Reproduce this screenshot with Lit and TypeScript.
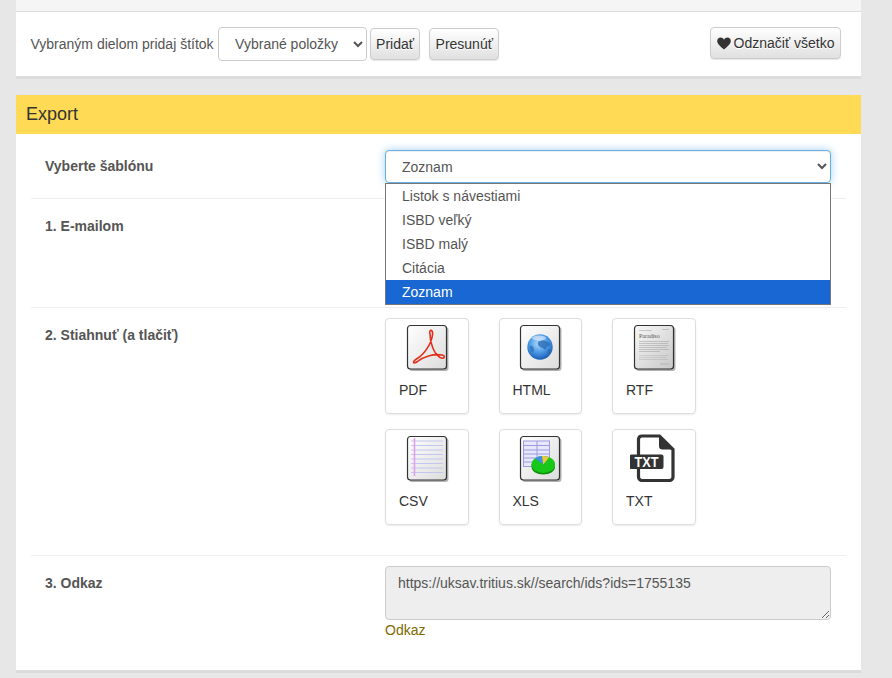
import { LitElement, html, css, svg } from 'lit';
import { customElement } from 'lit/decorators.js';

const templates = ['Listok s návestiami', 'ISBD veľký', 'ISBD malý', 'Citácia', 'Zoznam'];

// the beveled sheet shared by the export icons
function sheet(id: string, from: string, to: string) {
  return svg`
    <defs>
      <linearGradient id=${id} x1="0" y1="0" x2="1" y2="1">
        <stop offset="0" stop-color=${from}></stop>
        <stop offset="1" stop-color=${to}></stop>
      </linearGradient>
    </defs>
    <rect x="6" y="4" width="39.5" height="44" rx="3" fill="#000" opacity="0.3"></rect>
    <rect x="4.5" y="2.5" width="39" height="43.5" rx="3" fill="url(#${id})" stroke="#333" stroke-width="1.2"></rect>
  `;
}

const pdfIcon = svg`
  ${sheet('pdf-bg', '#ffffff', '#dcdcdc')}
  <path d="M27 11C25.500 6 30.500 6 29.500 12C28.500 20 22 31 13.500 36C9 39 10 41.500 14.500 38.500C20 34 30 30.500 39 32C43 33 41.500 36.500 37 34.500C31 31 27 20 27 11Z"
    fill="none" stroke="#e1301a" stroke-width="1.6" stroke-linejoin="round"></path>
`;

const htmlIcon = svg`
  ${sheet('html-bg', '#ffffff', '#dcdcdc')}
  <defs>
    <radialGradient id="globe" cx="0.45" cy="0.35" r="0.7">
      <stop offset="0" stop-color="#b5dcfb"></stop>
      <stop offset="0.5" stop-color="#4f9ce6"></stop>
      <stop offset="1" stop-color="#1353ad"></stop>
    </radialGradient>
  </defs>
  <circle cx="24" cy="24" r="12.700" fill="url(#globe)"></circle>
  <path d="M22 19C25 17 29 17 32 19C34 20 35 22 33 22.500C31 23 30 27 28.500 26.500C27 25 25.500 25 24 24C22.500 23 21 21 22 19Z" fill="#2a6cb8" opacity="0.8"></path>
  <path d="M14 23C16 22 18 24 18 27C18 29 16 30 15 28C14.500 26 13.500 25 14 23Z" fill="#2a6cb8" opacity="0.7"></path>
  <path d="M32 26C34 26 35.500 27 34.500 29C33.500 31 31.500 31 31.500 29Z" fill="#2a6cb8" opacity="0.8"></path>
  <ellipse cx="23" cy="15" rx="7" ry="2.500" fill="#ffffff" opacity="0.5"></ellipse>
`;

const rtfIcon = svg`
  ${sheet('rtf-bg', '#f8f8f8', '#c8c8c8')}
  <text x="9" y="15" font-family="Liberation Serif, serif" font-size="6" fill="#555">Paradiso</text>
  <g stroke="#888" stroke-width="0.4">
    <path d="M9 7.500H22M32 6.500H39"></path>
    <path d="M9 18.500H39M9 20.500H38M9 22.500H39M9 24.500H37M9 26.500H39M9 28.500H30"></path>
    <path d="M9 32.500H38M9 34.500H36M9 36.500H38" opacity="0.6"></path>
    <path d="M30 41H39"></path>
  </g>
`;

const csvIcon = svg`
  ${sheet('csv-bg', '#ffffff', '#dcdcdc')}
  <g stroke="#c3c6ee" stroke-width="1">
    <path d="M8 7H40M8 11.500H40M8 16H40M8 20.500H40M8 25H40M8 29.500H40M8 34H40M8 38.500H40"></path>
  </g>
  <path d="M11.500 4V42" stroke="#e0a0ee" stroke-width="1.600"></path>
`;

const xlsIcon = svg`
  ${sheet('xls-bg', '#ffffff', '#dcdcdc')}
  <rect x="7.500" y="7" width="26" height="25.500" fill="#e8e8fa" stroke="#9a9ae6" stroke-width="1"></rect>
  <path d="M7.500 11.500H33.500M7.500 16H33.500M7.500 20H33.500M7.500 24H33.500M7.500 28H33.500M21 7V32.500" stroke="#9a9ae6" stroke-width="1" fill="none"></path>
  <path d="M15.500 30V33C15.500 37.500 21 40.500 27.300 40.500C33.500 40.500 39 37.500 39 33V30Z" fill="#0b8f0b"></path>
  <ellipse cx="27.300" cy="30.500" rx="11.800" ry="8.500" fill="#19c719"></ellipse>
  <path d="M27.300 30.500L19 24.500C21 23 23.500 22 26 22Z" fill="#3f8fe0"></path>
  <path d="M27.300 30.500L26 22C28.500 22 31 22.500 33 23.500Z" fill="#f4c542"></path>
`;

const txtIcon = svg`
  <path d="M8.500 21V5A3.500 3.500 0 0 1 12 2H29.500L43 15.500V43A3.500 3.500 0 0 1 39.500 46.500H12A3.500 3.500 0 0 1 8.500 43V35"
    fill="none" stroke="#333" stroke-width="3.200"></path>
  <path d="M29 2V12A3.500 3.500 0 0 0 32.500 15.500H43Z" fill="#333"></path>
  <rect x="-0.500" y="20.500" width="34" height="14.500" rx="2" fill="#333"></rect>
  <text x="16.500" y="33.200" text-anchor="middle" font-family="Liberation Sans, sans-serif" font-weight="700"
    font-size="15" fill="#fff" textLength="24" lengthAdjust="spacingAndGlyphs">TXT</text>
`;

const formats = [
  { name: 'PDF', icon: pdfIcon },
  { name: 'HTML', icon: htmlIcon },
  { name: 'RTF', icon: rtfIcon },
  { name: 'CSV', icon: csvIcon },
  { name: 'XLS', icon: xlsIcon },
  { name: 'TXT', icon: txtIcon },
];

@customElement('app-root')
export class AppRoot extends LitElement {
  static styles = css`
    :host {
      display: block;
      min-height: 678px;
      box-sizing: border-box;
      padding: 0 31px 0 16px;
      background: #e7e7e7;
      font-family: 'Liberation Sans', Arial, sans-serif;
      font-size: 14px;
      line-height: 20px;
      color: #555;
    }

    .panel {
      background: #fff;
      box-shadow: 0 3px 0 #dcdcdc;
    }

    .strip {
      height: 11px;
      background: #f5f5f5;
      border-bottom: 1px solid #ddd;
    }

    .bulk {
      display: flex;
      align-items: center;
      height: 64px;
      padding: 0 20px 0 14.5px;
    }

    .bulk-label {
      margin-right: 4.5px;
    }

    .bulk .btn {
      margin-left: 3px;
    }

    .bulk .btn + .btn {
      margin-left: 9px;
      padding: 5px 5.5px;
    }

    .bulk .btn.clear {
      margin-left: auto;
      margin-bottom: 2px;
    }

    select {
      box-sizing: border-box;
      height: 34px;
      padding: 6px 12px;
      border: 1px solid #ccc;
      border-radius: 4px;
      background: #fff;
      font: inherit;
      color: #555;
    }

    .picked {
      width: 149px;
    }

    .btn {
      display: inline-flex;
      align-items: center;
      gap: 3px;
      padding: 5px 5px;
      border: 1px solid #ccc;
      border-radius: 4px;
      background: linear-gradient(#fff, #e0e0e0);
      box-shadow: inset 0 1px 0 rgba(255, 255, 255, 0.15), 0 1px 1px rgba(0, 0, 0, 0.1);
      text-shadow: 0 1px 0 #fff;
      font: inherit;
      color: #333;
    }

    .export {
      margin-top: 19px;
      padding-bottom: 30px;
    }

    h2 {
      margin: 0;
      padding: 0 10px;
      background: #ffdb55;
      font-size: 18px;
      font-weight: 400;
      line-height: 39px;
      color: #333;
    }

    .rows {
      margin: 0 15px;
    }

    .row {
      display: grid;
      grid-template-columns: 339px 1fr;
      padding: 10px 0 15px;
      border-bottom: 1px solid #eee;
    }

    .row:last-child {
      padding-bottom: 0;
      border-bottom: 0;
    }

    .row.first {
      padding-top: 16px;
    }

    .row.downloads {
      padding-bottom: 30px;
    }

    .label {
      padding: 7px 14px 0;
      font-weight: 700;
    }

    .first .label {
      padding-top: 6px;
    }

    .control {
      padding: 0 15px;
      min-width: 0;
    }

    .mail-space {
      height: 83px;
    }

    .dropdown {
      position: relative;
    }

    .template {
      display: block;
      width: 100%;
      height: 33px;
      border-color: #66afe9;
      outline: 0;
      box-shadow: inset 0 1px 1px rgba(0, 0, 0, 0.075), 0 0 8px rgba(102, 175, 233, 0.6);
    }

    .options {
      position: absolute;
      z-index: 2;
      top: 33px;
      left: 0;
      right: 0;
      margin: 0;
      padding: 0;
      list-style: none;
      background: #fff;
      border: 1px solid #767676;
    }

    .options li {
      height: 24px;
      padding: 0 16px;
      line-height: 24px;
    }

    .options li.on {
      background: #1967d2;
      color: #fff;
    }

    .tiles {
      display: grid;
      grid-template-columns: repeat(3, 83.5px);
      gap: 15px 30px;
    }

    .tile {
      box-sizing: border-box;
      height: 96px;
      padding: 4px 13px 0;
      border: 1px solid #ddd;
      border-radius: 4px;
      box-shadow: 0 1px 2px rgba(0, 0, 0, 0.08);
      color: #333;
      text-decoration: none;
    }

    .tile svg {
      display: block;
      width: 48px;
      height: 48px;
      margin: 0 auto 9px;
    }

    textarea {
      display: block;
      box-sizing: border-box;
      width: 100%;
      height: 54px;
      padding: 6px 12px;
      border: 1px solid #ccc;
      border-radius: 4px;
      background: #eee;
      font: inherit;
      color: #555;
    }

    .link {
      color: #806a00;
      text-decoration: none;
    }
  `;

  render() {
    return html`
      <section class="panel">
        <div class="strip"></div>
        <div class="bulk">
          <span class="bulk-label">Vybraným dielom pridaj štítok</span>
          <select class="picked"><option>Vybrané položky</option></select>
          <button class="btn">Pridať</button>
          <button class="btn">Presunúť</button>
          <button class="btn clear">
            <svg width="14" height="13" viewBox="0 0 14 13">
              <path d="M7 12.500C3 9 0.200 6.800 0.200 3.900C0.200 1.900 1.700 0.600 3.500 0.600C5 0.600 6.300 1.400 7 2.700C7.700 1.400 9 0.600 10.500 0.600C12.300 0.600 13.800 1.900 13.800 3.900C13.800 6.800 11 9 7 12.500Z" fill="#333"></path>
            </svg>
            Odznačiť všetko
          </button>
        </div>
      </section>

      <section class="panel export">
        <h2>Export</h2>
        <div class="rows">
          <div class="row first">
            <div class="label">Vyberte šablónu</div>
            <div class="control">
              <div class="dropdown">
                <select class="template"><option>Zoznam</option></select>
                <ul class="options">
                  ${templates.map((t) => html`<li class=${t === 'Zoznam' ? 'on' : ''}>${t}</li>`)}
                </ul>
              </div>
            </div>
          </div>
          <div class="row">
            <div class="label">1. E-mailom</div>
            <div class="control"><div class="mail-space"></div></div>
          </div>
          <div class="row downloads">
            <div class="label">2. Stiahnuť (a tlačiť)</div>
            <div class="control">
              <div class="tiles">
                ${formats.map(
                  (f) => html`
                    <a class="tile" href="#">
                      <svg viewBox="0 0 48 48">${f.icon}</svg>
                      ${f.name}
                    </a>
                  `
                )}
              </div>
            </div>
          </div>
          <div class="row">
            <div class="label">3. Odkaz</div>
            <div class="control">
              <textarea readonly>https://uksav.tritius.sk//search/ids?ids=1755135</textarea>
              <a class="link" href="#">Odkaz</a>
            </div>
          </div>
        </div>
      </section>
    `;
  }
}
